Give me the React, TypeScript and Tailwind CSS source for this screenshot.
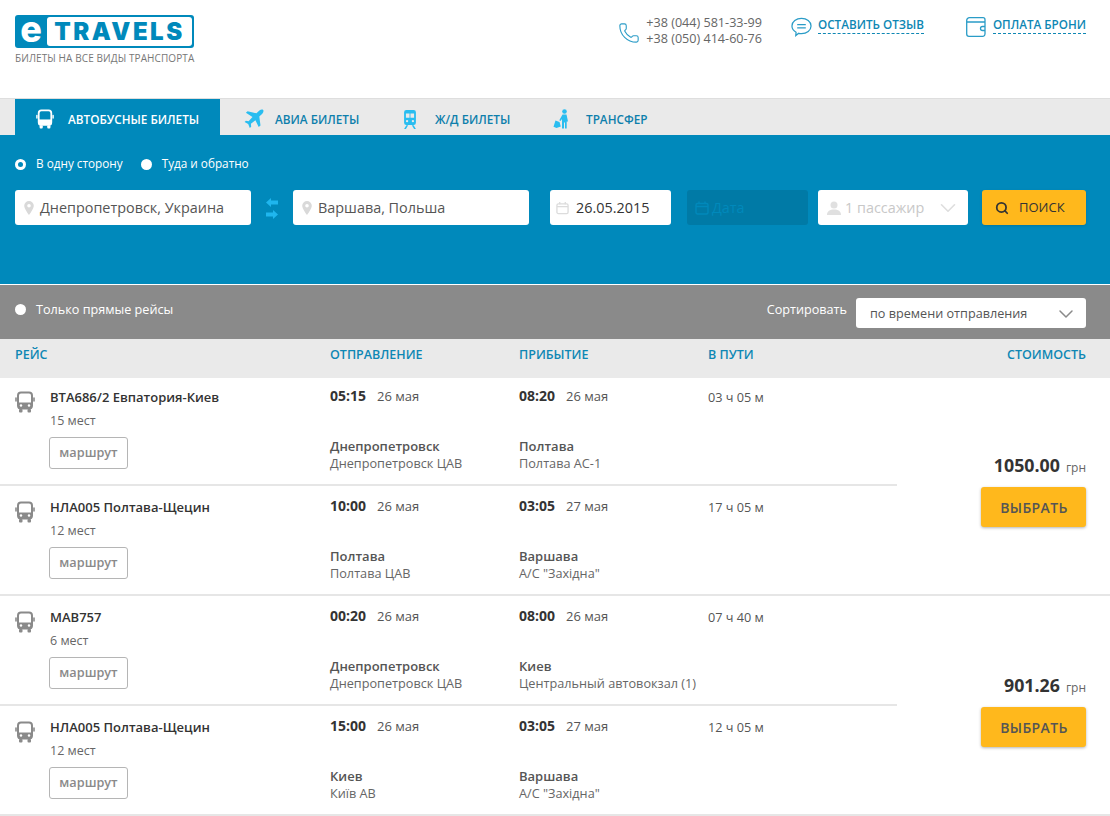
import { Search, ChevronDown, Phone } from 'lucide-react';

const font = { fontFamily: '"Open Sans", sans-serif' };

function BusIcon({ className }: { className: string }) {
  return (
    <svg viewBox="0 0 20 22" className={className} fill="none">
      <path d="M1 7V10M19 7V10" stroke="currentColor" strokeWidth="1.6" strokeLinecap="round" />
      <rect x="3" y="1.5" width="14" height="16" rx="3" stroke="currentColor" strokeWidth="2" />
      <path d="M3 11.5H17V17.5H3Z" fill="currentColor" />
      <rect x="4" y="18" width="3.5" height="3.5" rx="1" fill="currentColor" />
      <rect x="12.5" y="18" width="3.5" height="3.5" rx="1" fill="currentColor" />
      <circle cx="6" cy="14.5" r="1.2" fill="white" />
      <circle cx="14" cy="14.5" r="1.2" fill="white" />
    </svg>
  );
}

function PlaneIcon() {
  return (
    <svg viewBox="0 0 20 20" className="w-[20px] h-[20px] text-[#29bdf0]" fill="currentColor">
      <path d="M19.2 1c-1-.8-2.6-.4-3.8.6L12.4 4.3 3.6 2.2 1.9 3.7l6.6 4.2-3.9 4.3-2.7-.5L.6 13l3.6 1.9 1.6 4 1.4-1.2-.3-2.9 4.5-3.6 3.3 6.9 1.8-1.5-1.2-9 3-2.9c1.2-1.2 1.5-2.9.9-3.7Z" />
    </svg>
  );
}

function TrainIcon() {
  return (
    <svg viewBox="0 0 14 22" className="w-[14px] h-[20px] text-[#29bdf0]" fill="currentColor">
      <path fillRule="evenodd" d="M3 1h8a2.5 2.5 0 0 1 2.5 2.5V15a2.5 2.5 0 0 1-2.5 2.5H3A2.5 2.5 0 0 1 .5 15V3.500A2.500 2.500 0 0 1 3 1Zm-.5 4v4.500h4V5Zm5 0v4.500h4V5ZM3.800 12a1.300 1.300 0 1 0 0 2.600 1.300 1.300 0 0 0 0-2.600Zm6.400 0a1.300 1.300 0 1 0 0 2.600 1.300 1.300 0 0 0 0-2.600Z" />
      <path d="M3 18h2l-2.500 4H.5ZM9 18h2l2.500 4h-2Z" />
    </svg>
  );
}

function TransferIcon() {
  return (
    <svg viewBox="0 0 18 20" className="w-[18px] h-[20px] text-[#29bdf0]" fill="currentColor">
      <circle cx="11.500" cy="2.500" r="2.300" />
      <path d="M9.500 5.500h4l1.500 7h-1.300v7h-1.700v-6h-1v6H9v-9.500L7.500 12 6.300 11.300Z" />
      <path d="M2.500 11.500l4 1.500 1.300 4.500-4.300 1.500-3-1.300Z" />
    </svg>
  );
}

function PinIcon() {
  return (
    <svg viewBox="0 0 10 14" className="w-[10px] h-[14px] text-[#d9d9d9] shrink-0" fill="currentColor">
      <path fillRule="evenodd" d="M5 0a4.800 4.800 0 0 1 4.800 4.800C9.800 8 5 14 5 14S.2 8 .2 4.800A4.800 4.800 0 0 1 5 0Zm0 3a1.800 1.800 0 1 0 0 3.600A1.800 1.800 0 0 0 5 3Z" />
    </svg>
  );
}

function CalendarIcon({ className }: { className: string }) {
  return (
    <svg viewBox="0 0 14 14" className={className} fill="none" stroke="currentColor" strokeWidth="1.400">
      <rect x="1" y="2.500" width="12" height="10.500" rx="1.500" />
      <path d="M1 5.500H13M4 .5V3M10 .5V3" />
    </svg>
  );
}

function Radio({ checked }: { checked?: boolean }) {
  return (
    <span className="w-[11px] h-[11px] rounded-full bg-white shrink-0 flex items-center justify-center">
      {checked && <span className="w-[5px] h-[5px] rounded-full bg-[#0089bb]" />}
    </span>
  );
}

function Tab({ icon, label, active, width }: { icon: React.ReactNode; label: string; active?: boolean; width: string }) {
  return (
    <div className={`h-full pt-[4px] flex items-center font-semibold ${width} ${active ? 'bg-[#0089bb] text-white' : 'text-[#0e7fac]'}`}>
      {icon}
      <span className="text-[11.75px] pt-[1px]">{label}</span>
    </div>
  );
}

type Segment = {
  name: string;
  seats: string;
  dep: string;
  depDate: string;
  arr: string;
  arrDate: string;
  dur: string;
  from: string;
  fromSt: string;
  to: string;
  toSt: string;
};

const groups: { price: string; segments: Segment[] }[] = [
  {
    price: '1050.00',
    segments: [
      { name: 'ВТА686/2 Евпатория-Киев', seats: '15 мест', dep: '05:15', depDate: '26 мая', arr: '08:20', arrDate: '26 мая', dur: '03 ч 05 м', from: 'Днепропетровск', fromSt: 'Днепропетровск ЦАВ', to: 'Полтава', toSt: 'Полтава АС-1' },
      { name: 'НЛА005 Полтава-Щецин', seats: '12 мест', dep: '10:00', depDate: '26 мая', arr: '03:05', arrDate: '27 мая', dur: '17 ч 05 м', from: 'Полтава', fromSt: 'Полтава ЦАВ', to: 'Варшава', toSt: 'А/С "Західна"' },
    ],
  },
  {
    price: '901.26',
    segments: [
      { name: 'МАВ757', seats: '6 мест', dep: '00:20', depDate: '26 мая', arr: '08:00', arrDate: '26 мая', dur: '07 ч 40 м', from: 'Днепропетровск', fromSt: 'Днепропетровск ЦАВ', to: 'Киев', toSt: 'Центральный автовокзал (1)' },
      { name: 'НЛА005 Полтава-Щецин', seats: '12 мест', dep: '15:00', depDate: '26 мая', arr: '03:05', arrDate: '27 мая', dur: '12 ч 05 м', from: 'Киев', fromSt: 'Київ АВ', to: 'Варшава', toSt: 'А/С "Західна"' },
    ],
  },
];

function SegmentRow({ s, last }: { s: Segment; last: boolean }) {
  return (
    <div className={`flex pl-[15px] pt-[10px] ${last ? 'h-[106px]' : 'h-[108px] mb-[2px] border-b-2 border-[#e6e6e6]'}`}>
      <div className="w-[315px] flex shrink-0">
        <BusIcon className="w-[20px] h-[22px] text-[#8a8a8a] mt-[3px] mr-[15px] shrink-0" />
        <div>
          <div className="text-[13px] leading-[18px] font-semibold text-[#333]">{s.name}</div>
          <div className="text-[12.5px] leading-[18px] text-[#666] mt-[6px]">{s.seats}</div>
          <div className="w-[79px] h-[32px] -ml-px mt-[7px] border border-[#b5b5b5] rounded-[3px] flex items-center justify-center text-[12.7px] font-semibold text-[#8a8a8a]">маршрут</div>
        </div>
      </div>
      <div className="w-[189px] shrink-0">
        <div className="-mt-px text-[14px] leading-[18px] text-[#333] whitespace-nowrap"><span className="font-bold mr-[11px]">{s.dep}</span><span className="text-[13px] text-[#555]">{s.depDate}</span></div>
        <div className="text-[13px] leading-[18px] font-semibold text-[#555] mt-[32px]">{s.from}</div>
        <div className="text-[12.7px] leading-[17px] text-[#666]">{s.fromSt}</div>
      </div>
      <div className="w-[189px] shrink-0">
        <div className="-mt-px text-[14px] leading-[18px] text-[#333] whitespace-nowrap"><span className="font-bold mr-[11px]">{s.arr}</span><span className="text-[13px] text-[#555]">{s.arrDate}</span></div>
        <div className="text-[13px] leading-[18px] font-semibold text-[#555] mt-[32px]">{s.to}</div>
        <div className="text-[12.7px] leading-[17px] text-[#666] whitespace-nowrap">{s.toSt}</div>
      </div>
      <div className="text-[12.7px] leading-[18px] text-[#555]">{s.dur}</div>
    </div>
  );
}

export default function App() {
  return (
    <div className="min-h-screen bg-white overflow-hidden" style={font}>
      <header className="h-[99px] border-b border-[#dedede] flex justify-between pl-[15px] pr-[24px] pt-[15px]">
        <div className="w-[179px]">
          <div className="h-[33px] bg-[#0089bb] rounded-[3px] flex items-stretch p-[2px] pl-0 font-['Inter',sans-serif]">
            <span className="w-[32px] text-center text-white text-[36px] font-extrabold leading-[24px]">e</span>
            <span className="flex-1 bg-white rounded-[3px] text-[#0089bb] text-[24px] font-black leading-[29px] text-center tracking-[2.5px]">TRAVELS</span>
          </div>
          <div className="text-[10px] text-[#777] leading-[14px] mt-[3px] whitespace-nowrap tracking-[0.1px]">БИЛЕТЫ НА ВСЕ ВИДЫ ТРАНСПОРТА</div>
        </div>
        <div className="flex">
          <Phone className="w-[22px] h-[22px] text-[#2a9cc7] mt-[7px] mr-[6px]" strokeWidth={1.200} />
          <div className="text-[12.6px] leading-[16px] text-[#666] mr-[29px]">
            <div>+38 (044) 581-33-99</div>
            <div>+38 (050) 414-60-76</div>
          </div>
          <svg viewBox="0 0 22 20" className="w-[21px] h-[20px] text-[#2a9cc7] mt-[2px] mr-[6px]" fill="none" stroke="currentColor" strokeWidth="1.300">
            <path d="M11 1c5.500 0 10 3.400 10 8s-4.500 8-10 8c-1 0-2-.1-2.900-.4L5 19l.3-3.500C2.700 14 1 11.700 1 9c0-4.600 4.500-8 10-8Z" />
            <path d="M6.500 7.500h9M6.500 11h9" />
          </svg>
          <div className="text-[11.7px] font-semibold text-[#0e87b4] h-[18px] leading-[17px] border-b border-dashed border-[#0e87b4] mt-[1px] mr-[42px]">ОСТАВИТЬ ОТЗЫВ</div>
          <svg viewBox="0 0 20 20" className="w-[20px] h-[20px] text-[#2a9cc7] mt-[2px] mr-[7px]" fill="none" stroke="currentColor" strokeWidth="1.300">
            <path d="M.7 3.500A2.800 2.800 0 0 1 3.500.7H17a2 2 0 0 1 2 2V5H.7M.7 3.500v13.500a2.300 2.300 0 0 0 2.300 2.300h14a2.300 2.300 0 0 0 2-2.300V5" />
            <path d="M19 9.500h-2.500a2 2 0 0 0 0 4H19" />
          </svg>
          <div className="text-[11.7px] font-semibold text-[#0e87b4] h-[18px] leading-[17px] border-b border-dashed border-[#0e87b4] mt-[1px]">ОПЛАТА БРОНИ</div>
        </div>
      </header>

      <nav className="h-[36px] bg-[#eaeaea] pl-[15px] flex">
        <Tab width="w-[205px]" active label="АВТОБУСНЫЕ БИЛЕТЫ" icon={<BusIcon className="w-[18px] h-[20px] text-white ml-[21px] mr-[14px]" />} />
        <Tab width="w-[157px]" label="АВИА БИЛЕТЫ" icon={<span className="ml-[24px] mr-[11px] flex"><PlaneIcon /></span>} />
        <Tab width="w-[152px]" label="Ж/Д БИЛЕТЫ" icon={<span className="ml-[26px] mr-[18px] flex"><TrainIcon /></span>} />
        <Tab width="w-[150px]" label="ТРАНСФЕР" icon={<span className="ml-[24px] mr-[15px] flex"><TransferIcon /></span>} />
      </nav>

      <section className="h-[149px] bg-[#0089bb] border-b border-[#0089bb] px-[15px] pt-[21px]">
        <div className="flex items-center text-[11.75px] text-white h-[16px]">
          <Radio checked />
          <span className="ml-[10px] mr-[18px]">В одну сторону</span>
          <Radio />
          <span className="ml-[10px]">Туда и обратно</span>
        </div>
        <div className="flex mt-[18px] h-[35px] text-[14.4px]">
          <div className="w-[236px] bg-white rounded-[3px] flex items-center pl-[9px] text-[#555]">
            <PinIcon />
            <span className="ml-[6px]">Днепропетровск, Украина</span>
          </div>
          <div className="w-[42px] flex flex-col items-center justify-center gap-[3px] pt-[2px]">
            <svg viewBox="0 0 12 9" className="w-[12px] h-[9px] text-[#1fb6ee]" fill="currentColor"><path d="M0 4.500 5 0v2.500h7v4H5V9Z" /></svg>
            <svg viewBox="0 0 12 9" className="w-[12px] h-[9px] text-[#1fb6ee]" fill="currentColor"><path d="M12 4.500 7 0v2.500H0v4h7V9Z" /></svg>
          </div>
          <div className="w-[236px] bg-white rounded-[3px] flex items-center pl-[9px] text-[#555]">
            <PinIcon />
            <span className="ml-[6px]">Варшава, Польша</span>
          </div>
          <div className="w-[121px] ml-[21px] bg-white rounded-[3px] flex items-center pl-[6px] text-[#333]">
            <CalendarIcon className="w-[13px] h-[14px] text-[#dcdcdc]" />
            <span className="ml-[7px]">26.05.2015</span>
          </div>
          <div className="w-[121px] ml-[16px] bg-[#007aa6] rounded-[3px] flex items-center pl-[8px] text-[#0089bb]">
            <CalendarIcon className="w-[14px] h-[14px]" />
            <span className="ml-[3px]">Дата</span>
          </div>
          <div className="w-[150px] ml-[10px] bg-white rounded-[3px] flex items-center pl-[9px] text-[#c8c8c8]">
            <svg viewBox="0 0 14 14" className="w-[14px] h-[14px] text-[#e0e0e0] shrink-0" fill="currentColor"><circle cx="7" cy="4" r="3.500" /><path d="M0 14c0-4 3-5.500 7-5.500S14 10 14 14Z" /></svg>
            <span className="ml-[4px]">1 пассажир</span>
            <ChevronDown className="w-[26px] h-[26px] text-[#dedede] ml-[11px] shrink-0" strokeWidth={1.500} />
          </div>
          <div className="w-[104px] ml-[14px] bg-[#ffb81c] rounded-[3px] shadow-sm flex items-center pl-[13px] pt-px text-[13px] text-[#333]">
            <Search className="w-[14px] h-[14px] mr-[10px]" strokeWidth={3} />
            ПОИСК
          </div>
        </div>
      </section>

      <div className="h-[55px] bg-[#8a8a8a] border-t border-white flex justify-between pl-[15px] pr-[24px] pt-[14px]">
        <div className="flex items-center h-[20px] text-[12.65px] text-white">
          <Radio />
          <span className="ml-[10px]">Только прямые рейсы</span>
        </div>
        <div className="flex text-[12.65px] -mt-px">
          <span className="text-white mr-[9px] mt-[2px]">Сортировать</span>
          <div className="w-[230px] h-[30px] bg-white rounded-[3px] flex items-center justify-between pl-[14px] pr-[8px] pt-px text-[#555]">
            по времени отправления
            <ChevronDown className="w-[24px] h-[24px] text-[#8a8a8a]" strokeWidth={1.500} />
          </div>
        </div>
      </div>

      <div className="h-[39px] bg-[#eaeaea] flex items-center pb-[6px] pl-[15px] pr-[24px] text-[12.5px] font-semibold text-[#0e87b4]">
        <span className="w-[315px]">РЕЙС</span>
        <span className="w-[189px]">ОТПРАВЛЕНИЕ</span>
        <span className="w-[189px]">ПРИБЫТИЕ</span>
        <span>В ПУТИ</span>
        <span className="ml-auto">СТОИМОСТЬ</span>
      </div>

      {groups.map((g) => (
        <div key={g.price} className="flex mb-[2px] border-b-2 border-[#e6e6e6]">
          <div className="w-[897px] shrink-0">
            {g.segments.map((s, i) => (
              <SegmentRow key={s.dep} s={s} last={i === g.segments.length - 1} />
            ))}
          </div>
          <div className="flex-1 flex flex-col items-end pr-[24px] pt-[75px]">
            <div className="leading-[24px] text-[#333] whitespace-nowrap">
              <span className="text-[17.8px] font-bold">{g.price}</span>
              <span className="text-[12px] text-[#666] ml-[6px]">грн</span>
            </div>
            <div className="w-[105px] h-[40px] mt-[7px] bg-[#ffb81c] rounded-[3px] shadow-[0_1px_3px_rgba(0,0,0,0.3)] flex items-center justify-center pl-px text-[14px] font-semibold tracking-[0.4px] text-[#555]">ВЫБРАТЬ</div>
          </div>
        </div>
      ))}
    </div>
  );
}
